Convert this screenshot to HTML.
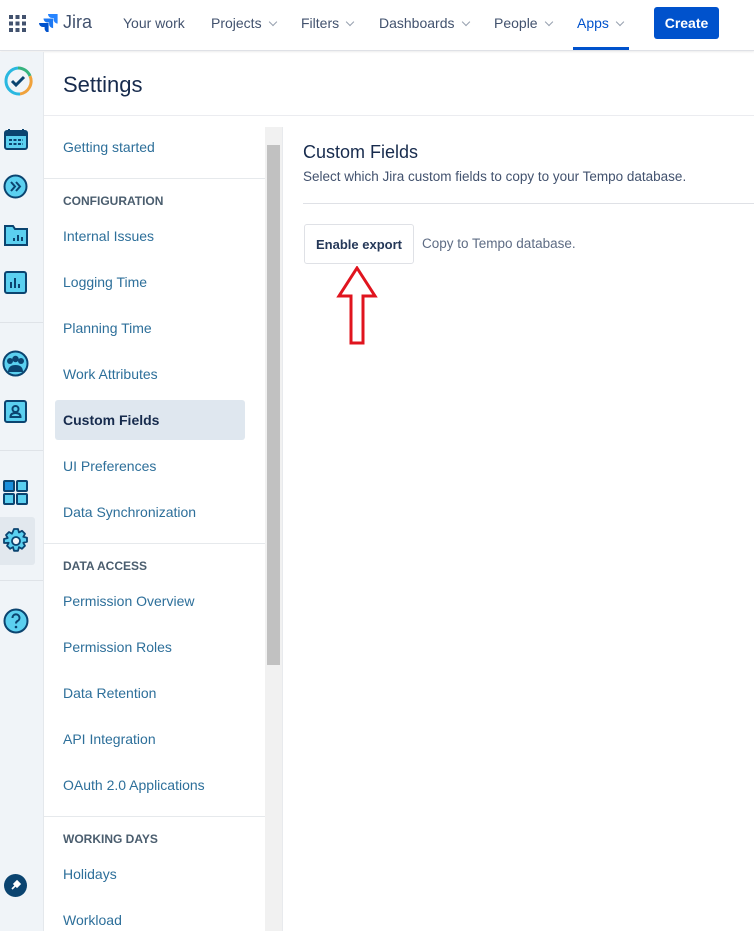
<!DOCTYPE html>
<html><head><style>
*{margin:0;padding:0;box-sizing:border-box}
body{width:754px;height:931px;overflow:hidden;background:#fff;font-family:"Liberation Sans",sans-serif;position:relative;color:#172b4d}
.top{position:absolute;left:0;top:0;width:754px;height:51px;background:#fff;border-bottom:1px solid #dfe1e6;box-shadow:0 1px 2px rgba(0,0,0,.08)}
.top .it{position:absolute;top:15px;font-size:14px;color:#42526e}
.chev{display:inline-block;width:6px;height:6px;border-right:1.5px solid #97a0af;border-bottom:1.5px solid #97a0af;transform:rotate(45deg);margin-left:8px;position:relative;top:-3px}
.side{position:absolute;left:0;top:52px;width:44px;height:879px;background:#f0f4f8;border-right:1px solid #e4e8ec}
.side .hr{position:absolute;left:0;width:43px;height:1px;background:#dfe3e8}
.side svg{position:absolute;left:3px}
.nav{position:absolute;left:44px;top:116px;width:221px;height:815px}
.nav .l{position:absolute;left:19px;font-size:14px;color:#2d6f9a}
.nav .h{position:absolute;left:19px;font-size:12px;font-weight:bold;color:#4a5d6e}
.nav .hr{position:absolute;left:0;width:221px;height:1px;background:#e6e9ec}
</style></head><body>
<div class="top">
<svg style="position:absolute;left:9px;top:15px" width="17" height="17" viewBox="0 0 17 17" fill="#42526e"><rect x="0" y="0" width="4" height="4"/><rect x="6.5" y="0" width="4" height="4"/><rect x="13" y="0" width="4" height="4"/><rect x="0" y="6.5" width="4" height="4"/><rect x="6.5" y="6.5" width="4" height="4"/><rect x="13" y="6.5" width="4" height="4"/><rect x="0" y="13" width="4" height="4"/><rect x="6.5" y="13" width="4" height="4"/><rect x="13" y="13" width="4" height="4"/></svg>
<svg style="position:absolute;left:39px;top:13px" width="19" height="19" viewBox="0 0 19 19"><path d="M18 1H9a4 4 0 0 0 4 4h1.6v1.6a4 4 0 0 0 4 4V1z" fill="#2684ff"/><path d="M13.5 5.5H4.5a4 4 0 0 0 4 4h1.6v1.6a4 4 0 0 0 4 4V5.5z" fill="#1d78f2"/><path d="M9 10H0a4 4 0 0 0 4 4h1.6v1.6a4 4 0 0 0 4 4V10z" fill="#0052cc"/></svg>
<span class="it" style="left:63px;top:12px;font-size:18px;color:#42526e">Jira</span>
<span class="it" style="left:123px">Your work</span>
<span class="it" style="left:211px">Projects<i class="chev"></i></span>
<span class="it" style="left:301px">Filters<i class="chev"></i></span>
<span class="it" style="left:379px">Dashboards<i class="chev"></i></span>
<span class="it" style="left:494px">People<i class="chev"></i></span>
<span class="it" style="left:577px;color:#0052cc">Apps<i class="chev"></i></span>
<div style="position:absolute;left:573px;top:47px;width:56px;height:3px;background:#0052cc"></div>
<div style="position:absolute;left:654px;top:7px;width:65px;height:32px;background:#0052cc;border-radius:3px;color:#fff;font-weight:bold;font-size:14px;text-align:center;line-height:32px">Create</div>
</div>

<div class="side">
<svg style="top:14px" width="30" height="30" viewBox="0 0 30 30"><path d="M15 2a13 13 0 0 1 12 8" stroke="#36b37e" stroke-width="3" fill="none"/><path d="M27 10a13 13 0 0 1-10 18" stroke="#f0a23c" stroke-width="3" fill="none"/><path d="M17 28A13 13 0 0 1 15 2" stroke="#2ab8e0" stroke-width="3" fill="none"/><path d="M9 15l4 4 8-8" stroke="#0b4470" stroke-width="3" fill="none"/></svg>
<svg style="top:76px;left:4px" width="24" height="22" viewBox="0 0 24 22"><rect x="1" y="3" width="22" height="18" rx="2" fill="#5bd0f0" stroke="#0b4470" stroke-width="2"/><rect x="1" y="3" width="22" height="5" fill="#0b4470"/><path d="M5 1v4M19 1v4" stroke="#0b4470" stroke-width="2"/><path d="M5 12h14M5 16h14" stroke="#0b4470" stroke-width="2" stroke-dasharray="3 1.5"/></svg>
<svg style="top:122px;left:3px" width="25" height="25" viewBox="0 0 25 25"><circle cx="12.5" cy="12.5" r="11" fill="#5bd0f0" stroke="#0b4470" stroke-width="2"/><path d="M8 8l4 4.5-4 4.5M13 8l4 4.5-4 4.5" stroke="#0b4470" stroke-width="2" fill="none"/></svg>
<svg style="top:172px;left:4px" width="24" height="22" viewBox="0 0 24 22"><path d="M1 2h8l2 3h12v16H1z" fill="#5bd0f0" stroke="#0b4470" stroke-width="2"/><path d="M10 17v-3M14 17v-6M18 17v-4" stroke="#0b4470" stroke-width="2"/></svg>
<svg style="top:219px;left:4px" width="23" height="23" viewBox="0 0 23 23"><rect x="1" y="1" width="21" height="21" rx="2" fill="#5bd0f0" stroke="#0b4470" stroke-width="2"/><path d="M7 17v-6M11 17V7M15 17v-4" stroke="#0b4470" stroke-width="2"/></svg>
<div class="hr" style="top:270px"></div>
<svg style="top:298px;left:2px" width="27" height="27" viewBox="0 0 27 27"><circle cx="13.5" cy="13.5" r="12" fill="#5bd0f0" stroke="#0b4470" stroke-width="2"/><circle cx="8" cy="11" r="3" fill="#0b4470"/><circle cx="19" cy="11" r="3" fill="#0b4470"/><circle cx="13.5" cy="9" r="3.2" fill="#0b4470"/><path d="M6 22c0-5 3-7 7.5-7s7.5 2 7.5 7" fill="#0b4470"/></svg>
<svg style="top:348px;left:4px" width="23" height="23" viewBox="0 0 23 23"><rect x="1" y="1" width="21" height="21" rx="2" fill="#5bd0f0" stroke="#0b4470" stroke-width="2"/><circle cx="11.5" cy="9" r="3" fill="none" stroke="#0b4470" stroke-width="2"/><path d="M6.5 17c0-3 2-4 5-4s5 1 5 4z" fill="none" stroke="#0b4470" stroke-width="2"/></svg>
<div class="hr" style="top:398px"></div>
<svg style="top:428px;left:3px" width="25" height="25" viewBox="0 0 25 25" stroke="#0b4470" stroke-width="2"><rect x="1" y="1" width="10" height="10" rx="1" fill="#1a8fdc"/><rect x="14" y="1" width="10" height="10" rx="1" fill="#5bd0f0"/><rect x="1" y="14" width="10" height="10" rx="1" fill="#5bd0f0"/><rect x="14" y="14" width="10" height="10" rx="1" fill="#5bd0f0"/></svg>
<div style="position:absolute;left:0;top:465px;width:35px;height:48px;background:#e2e8ee;border-radius:0 3px 3px 0"></div>
<svg style="top:476px;left:3px" width="26" height="26" viewBox="0 0 26 26"><path d="M11 1h4l1 3.5 3-1.7 3 3-1.7 3 3.7 1v4l-3.7 1 1.7 3-3 3-3-1.7-1 3.7h-4l-1-3.7-3 1.7-3-3 1.7-3L1 15v-4l3.7-1-1.7-3 3-3 3 1.7z" fill="#5bd0f0" stroke="#0b4470" stroke-width="1.8" stroke-linejoin="round"/><circle cx="13" cy="13" r="4" fill="#f0f4f8" stroke="#0b4470" stroke-width="1.8"/></svg>
<div class="hr" style="top:528px"></div>
<svg style="top:556px;left:3px" width="26" height="26" viewBox="0 0 26 26"><circle cx="13" cy="13" r="11.5" fill="#5bd0f0" stroke="#0b4470" stroke-width="2"/><path d="M9.5 10a3.5 3.5 0 1 1 5 3c-1 .6-1.5 1.2-1.5 2.5" stroke="#0b4470" stroke-width="2" fill="none"/><circle cx="13" cy="19" r="1.3" fill="#0b4470"/></svg>
<svg style="top:822px;left:4px" width="23" height="23" viewBox="0 0 23 23"><circle cx="11.5" cy="11.5" r="11.5" fill="#0b4470"/><path d="M8 15l3-3M11 8l4 4M13 7l3 3-3 3-3-3z" stroke="#fff" stroke-width="1.6" fill="#fff"/></svg>
</div>

<div style="position:absolute;left:63px;top:72px;font-size:22px;color:#172b4d">Settings</div>
<div style="position:absolute;left:44px;top:115px;width:710px;height:1px;background:#ebecf0"></div>

<div class="nav">
<span class="l" style="top:23px">Getting started</span>
<div class="hr" style="top:62px"></div>
<span class="h" style="top:78px">CONFIGURATION</span>
<span class="l" style="top:112px">Internal Issues</span>
<span class="l" style="top:158px">Logging Time</span>
<span class="l" style="top:204px">Planning Time</span>
<span class="l" style="top:250px">Work Attributes</span>
<div style="position:absolute;left:11px;top:284px;width:190px;height:40px;background:#dfe7ef;border-radius:3px"></div>
<span class="l" style="top:296px;color:#172b4d;font-weight:bold">Custom Fields</span>
<span class="l" style="top:342px">UI Preferences</span>
<span class="l" style="top:388px">Data Synchronization</span>
<div class="hr" style="top:427px"></div>
<span class="h" style="top:443px">DATA ACCESS</span>
<span class="l" style="top:477px">Permission Overview</span>
<span class="l" style="top:523px">Permission Roles</span>
<span class="l" style="top:569px">Data Retention</span>
<span class="l" style="top:615px">API Integration</span>
<span class="l" style="top:661px">OAuth 2.0 Applications</span>
<div class="hr" style="top:700px"></div>
<span class="h" style="top:716px">WORKING DAYS</span>
<span class="l" style="top:750px">Holidays</span>
<span class="l" style="top:796px">Workload</span>
</div>

<div style="position:absolute;left:265px;top:127px;width:17px;height:804px;background:#f1f1f1"></div>
<div style="position:absolute;left:267px;top:145px;width:13px;height:520px;background:#c1c1c1"></div>
<div style="position:absolute;left:282px;top:127px;width:1px;height:804px;background:#e8eaed"></div>

<div style="position:absolute;left:303px;top:142px;font-size:18px;color:#172b4d">Custom Fields</div>
<div style="position:absolute;left:303px;top:169px;font-size:13.5px;color:#42526e">Select which Jira custom fields to copy to your Tempo database.</div>
<div style="position:absolute;left:303px;top:203px;width:451px;height:1px;background:#dfe1e6"></div>
<div style="position:absolute;left:304px;top:224px;width:110px;height:40px;border:1px solid #dfe1e6;border-radius:3px;font-size:13px;font-weight:bold;color:#253858;text-align:center;line-height:39px">Enable export</div>
<div style="position:absolute;left:422px;top:236px;font-size:13.5px;color:#5e6c84">Copy to Tempo database.</div>
<svg style="position:absolute;left:336px;top:266px" width="42" height="80" viewBox="0 0 42 80"><path d="M21 2L39 30H27V77H15V30H3Z" fill="#fff" stroke="#e0141e" stroke-width="3" stroke-linejoin="miter"/></svg>
</body></html>
